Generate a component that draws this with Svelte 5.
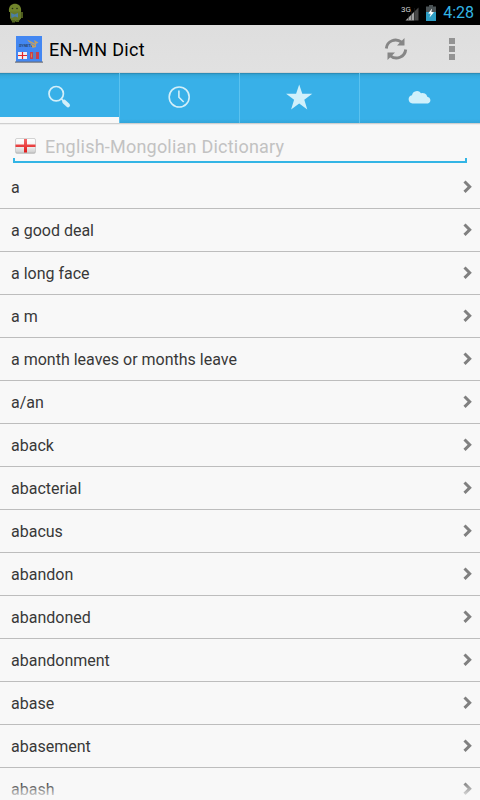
<script>
  const words = ['a', 'a good deal', 'a long face', 'a m', 'a month leaves or months leave', 'a/an', 'aback', 'abacterial', 'abacus', 'abandon', 'abandoned', 'abandonment', 'abase', 'abasement', 'abash'];
  const tabs = ['search', 'history', 'favorites', 'cloud'];
  let active = $state('search');
</script>

<div class="screen">
  <div class="status">
    <svg class="droid" width="16" height="20" viewBox="0 0 16 20">
      <path d="M12.500 9h2.500v6h-2.500z" fill="#4c5a1d" />
      <path d="M1 9C0 3 4 .8 7 .8s7 2.200 6 8.200z" fill="#71852c" />
      <path d="M2 8.500h11v7L10.500 18.500H4L2 15z" fill="#667a2b" />
      <path d="M4 17h3v2.500H4zM8 17h3v2H8z" fill="#536622" />
      <circle cx="4.500" cy="5.500" r=".8" fill="#26301a" /><circle cx="9" cy="5.500" r=".8" fill="#26301a" />
      <path d="M3 10l3.500 1.500L10 10v4.500l-3-1-3.500 1.500z" fill="#4b7fa5" />
    </svg>
    <svg class="signal" width="20" height="18" viewBox="0 0 20 18">
      <text x="1" y="7.500" class="net">3G</text>
      <path d="M5.500 16.500L14 8v8.500z" fill="#a4a4a4" /><path d="M14 8l4.500-4.500v13H14z" fill="#484848" />
      <path d="M8.500 9v7M11.500 7v9M14.500 4v12" stroke="#222" stroke-width=".5" />
    </svg>
    <svg class="battery" width="10" height="16" viewBox="0 0 10 16">
      <path d="M3 0h4v1.500h3v5.500H0V1.500h3z" fill="#4b5356" /><path d="M0 7h10v9H0z" fill="#2d9dc4" />
      <path d="M6 3.500L2.200 8.500l2.500.3L3.500 12.500 8 7.300 5.400 7z" fill="#fff" />
    </svg>
    <span class="time">4:28</span>
  </div>

  <header class="bar">
    <svg class="logo" width="28" height="28" viewBox="0 0 28 28">
      <rect width="26" height="26" fill="#4387f2" x="1" y="1" /><rect y="26.500" width="28" height="1.200" fill="#686e7a" />
      <text x="4" y="12" class="mark">SYNETEC</text>
      <path d="M12 4.500l8 4-1-3.500 4.500 2.500-2.500 1.500v3l-3.500 1-1-2.500z" fill="#c4a062" />
      <path d="M14 7.500l6 3" stroke="#4387f2" stroke-width=".8" />
      <rect x="3" y="17" width="9" height="7" fill="#f4eef2" /><path d="M7.500 17v7M3 20.500H12" stroke="#e3262e" stroke-width="1.200" />
      <rect x="15" y="17" width="9" height="7" fill="#c9404e" /><rect x="18" y="17" width="3" height="7" fill="#5582c8" /><path d="M16.500 18.500v4" stroke="#d98a42" />
    </svg>
    <h1>EN-MN Dict</h1>
    <svg class="refresh" width="24" height="24" viewBox="0 0 24 24">
      <g fill="none" stroke="#868686" stroke-width="2.900"><path d="M2.300 11.500A9.300 9.300 0 0 1 17.500 5.200" /><path d="M21.700 12.500A9.300 9.300 0 0 1 6.500 18.800" /></g>
      <path d="M20.500 1v7.500H13zM3.500 23v-7.500H11z" fill="#868686" />
    </svg>
    <div class="more"><i></i><i></i><i></i></div>
  </header>

  <nav>
    {#each tabs as tab}
      <button class:active={active === tab} aria-label={tab} onclick={() => (active = tab)}>
        <svg width="28" height="28" viewBox="0 0 28 28">
          {#if tab === 'search'}
            <circle cx="10.200" cy="10.700" r="7.200" fill="none" stroke="#d3eff9" stroke-width="1.700" />
            <path d="M15 15.500l2.500 2.500" stroke="#d3eff9" stroke-width="1.700" />
            <path d="M18.200 18.700l3.800 3.600" stroke="#d3eff9" stroke-width="4" stroke-linecap="round" />
          {:else if tab === 'history'}
            <circle cx="13.200" cy="14" r="10" fill="none" stroke="#d3eff9" stroke-width="1.600" />
            <path d="M12.900 7.500v6.700l4.800 4.800" fill="none" stroke="#d3eff9" stroke-width="1.600" />
          {:else if tab === 'favorites'}
            <path d="M13.200 1.500l3.100 9.300h10l-8 6 3 9.700-8.100-5.900-8.100 5.900 3-9.700-8-6h10z" fill="#d0f0fb" />
          {:else}
            <path d="M6.500 20.500a4.200 4.200 0 0 1-.5-8.300A5 5 0 0 1 15 10.200a5 5 0 0 1 6.300 3.500A3.500 3.500 0 0 1 22 20.500z" fill="#d0f0fb" />
          {/if}
        </svg>
      </button>
    {/each}
  </nav>

  <label class="field">
    <svg width="21" height="16" viewBox="0 0 21 16">
      <defs>
        <linearGradient id="cloth" x2="0" y2="1"><stop stop-color="#fff" /><stop offset=".5" stop-color="#f4f4f4" /><stop offset="1" stop-color="#d0d0d0" /></linearGradient>
        <linearGradient id="cross" x2="0" y2="1"><stop stop-color="#f46a6a" /><stop offset="1" stop-color="#e01818" /></linearGradient>
      </defs>
      <rect x=".5" y=".5" width="20" height="15" rx="1.500" fill="#999" />
      <rect x=".5" y=".5" width="20" height="14" rx="1.500" fill="url(#cloth)" stroke="#ccc" stroke-width=".7" />
      <path d="M9 1h3v5.500h8.500v2.500H12v5.500H9V9H.5V6.500H9z" fill="url(#cross)" />
    </svg>
    <input type="text" placeholder="English-Mongolian Dictionary" />
  </label>

  <ul>
    {#each words as word}
      <li>
        <span>{word}</span>
        <svg width="9" height="14" viewBox="0 0 9 14"><path d="M1.500 1.500L6.700 6.700l-5.200 5.200" fill="none" stroke="#808080" stroke-width="3" /></svg>
      </li>
    {/each}
  </ul>
  <div class="fade"></div>
</div>

<style>
  :global(body) { margin: 0; overflow: hidden; }
  .screen { position: relative; width: 480px; height: 800px; overflow: hidden; background: #f8f8f8; font-family: Roboto, sans-serif; color: #383838; display: flex; flex-direction: column; }
  .screen > * { box-sizing: border-box; flex-shrink: 0; }
  svg { display: block; flex: none; }
  .status { height: 25px; background: #000; display: flex; align-items: center; padding: 0 6px 0 8px; }
  .signal { margin-left: auto; margin-right: 6px; }
  .battery { margin-right: 7px; }
  .time { color: #33b5e5; font-size: 16px; line-height: 25px; }
  .net { font: 8px Roboto, sans-serif; fill: #d0d0d0; }
  .bar { height: 48px; background: linear-gradient(#dedede, #e1e1e1); border-bottom: 1px solid #d3d3d3; display: flex; align-items: center; padding: 0 25px 0 15px; }
  .logo { margin-top: 1px; }
  .mark { font: bold 3.800px Roboto, sans-serif; fill: #29466f; }
  h1 { margin: 2px auto 0 6px; font-size: 18px; font-weight: 400; letter-spacing: .35px; color: #000; }
  .refresh { margin-right: 41px; }
  .more { display: flex; flex-direction: column; gap: 2px; }
  .more i { width: 6px; height: 6px; background: #939393; }
  nav { height: 52px; display: flex; background: linear-gradient(#277ba3 0, #309fce 1px, #35aade 3px, #38b0e8 7px, #38b0e8 46px, #33a5da 50px, #cfcfcf 50px, #cfcfcf 51px, #eee 51px); }
  button { box-sizing: border-box; appearance: none; border: 0; border-right: 1px solid #5bc2ef; background: none; height: 50px; width: 120px; padding: 0 0 2px; display: flex; align-items: center; justify-content: center; }
  button:last-child { border-right: 0; }
  button.active { box-shadow: inset 0 -6px #f8f8f8; }
  .field { height: 38px; margin: 0 13px; display: flex; align-items: center; padding: 6px 2px 0; border-bottom: 2px solid #33b5e5; background: linear-gradient(#33b5e5, #33b5e5) left bottom / 2px 3px no-repeat, linear-gradient(#33b5e5, #33b5e5) right bottom / 2px 3px no-repeat; }
  input { border: 0; outline: 0; background: none; padding: 0; margin-left: 9px; flex: 1; font: 18px Roboto, sans-serif; letter-spacing: .22px; color: #333; }
  input::placeholder { color: #c2c2c2; opacity: 1; }
  ul { list-style: none; margin: 3px 0 0; padding: 0; }
  li { box-sizing: border-box; height: 43px; border-bottom: 1px solid #bdbdbd; display: flex; align-items: center; justify-content: space-between; padding: 0 8px 0 11px; font-size: 16px; }
  .fade { position: absolute; inset: auto 0 0; height: 18px; background: linear-gradient(#f8f8f800, #f8f8f8); pointer-events: none; }
</style>
